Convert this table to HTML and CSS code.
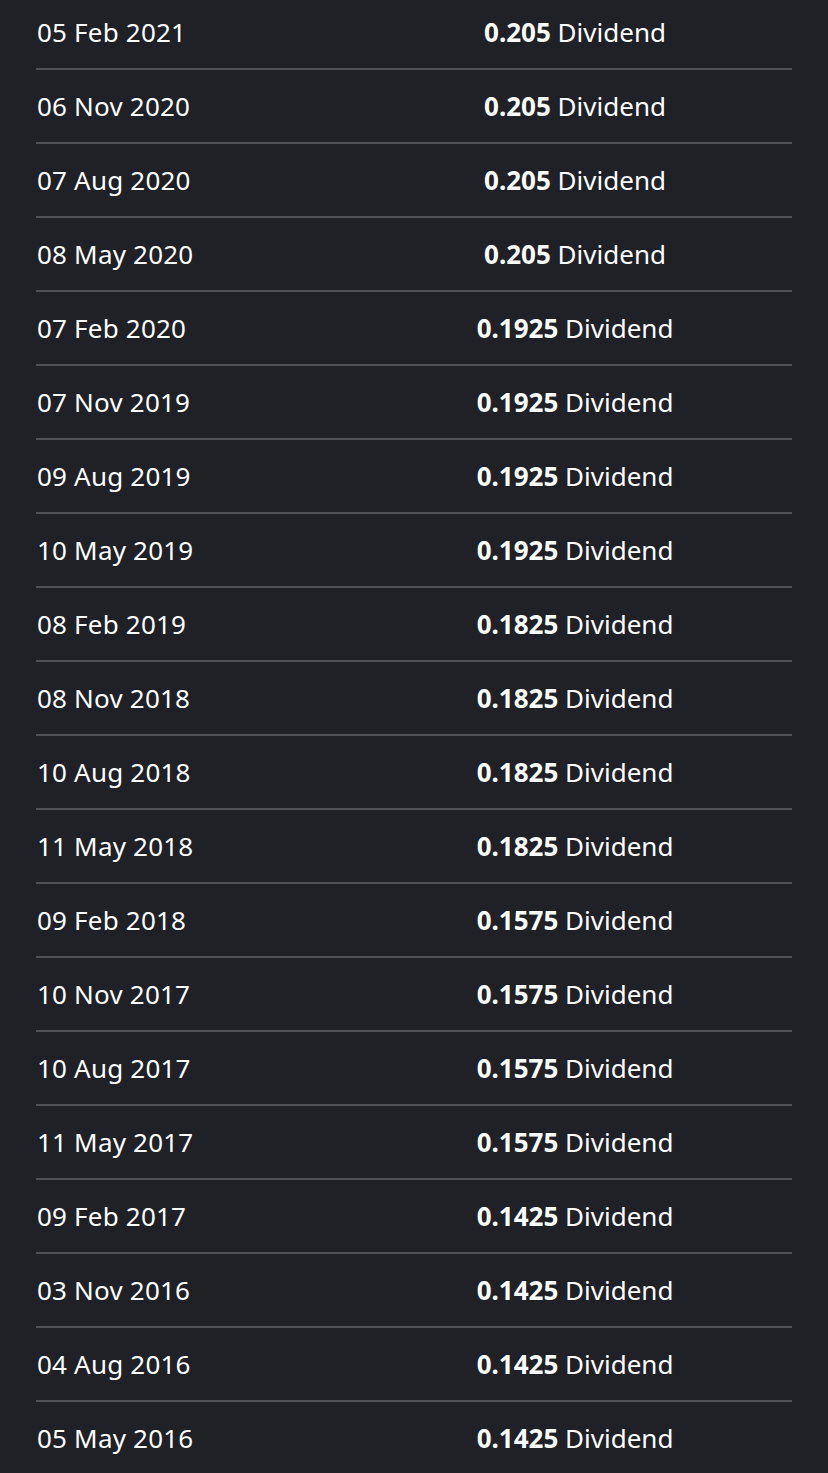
FILE: index.html
```html
<!DOCTYPE html>
<html lang="en">
  <head>
    <meta charset="UTF-8" />
    <meta name="viewport" content="width=device-width, initial-scale=1.0" />
    <title>Dividends</title>
    <link rel="stylesheet" href="styles.css">
  </head>
  <body>
    <div class="list">
      <div class="row"><span class="date">05 Feb 2021</span><span class="amount"><b>0.205</b> Dividend</span></div>
      <div class="row"><span class="date">06 Nov 2020</span><span class="amount"><b>0.205</b> Dividend</span></div>
      <div class="row"><span class="date">07 Aug 2020</span><span class="amount"><b>0.205</b> Dividend</span></div>
      <div class="row"><span class="date">08 May 2020</span><span class="amount"><b>0.205</b> Dividend</span></div>
      <div class="row"><span class="date">07 Feb 2020</span><span class="amount"><b>0.1925</b> Dividend</span></div>
      <div class="row"><span class="date">07 Nov 2019</span><span class="amount"><b>0.1925</b> Dividend</span></div>
      <div class="row"><span class="date">09 Aug 2019</span><span class="amount"><b>0.1925</b> Dividend</span></div>
      <div class="row"><span class="date">10 May 2019</span><span class="amount"><b>0.1925</b> Dividend</span></div>
      <div class="row"><span class="date">08 Feb 2019</span><span class="amount"><b>0.1825</b> Dividend</span></div>
      <div class="row"><span class="date">08 Nov 2018</span><span class="amount"><b>0.1825</b> Dividend</span></div>
      <div class="row"><span class="date">10 Aug 2018</span><span class="amount"><b>0.1825</b> Dividend</span></div>
      <div class="row"><span class="date">11 May 2018</span><span class="amount"><b>0.1825</b> Dividend</span></div>
      <div class="row"><span class="date">09 Feb 2018</span><span class="amount"><b>0.1575</b> Dividend</span></div>
      <div class="row"><span class="date">10 Nov 2017</span><span class="amount"><b>0.1575</b> Dividend</span></div>
      <div class="row"><span class="date">10 Aug 2017</span><span class="amount"><b>0.1575</b> Dividend</span></div>
      <div class="row"><span class="date">11 May 2017</span><span class="amount"><b>0.1575</b> Dividend</span></div>
      <div class="row"><span class="date">09 Feb 2017</span><span class="amount"><b>0.1425</b> Dividend</span></div>
      <div class="row"><span class="date">03 Nov 2016</span><span class="amount"><b>0.1425</b> Dividend</span></div>
      <div class="row"><span class="date">04 Aug 2016</span><span class="amount"><b>0.1425</b> Dividend</span></div>
      <div class="row"><span class="date">05 May 2016</span><span class="amount"><b>0.1425</b> Dividend</span></div>
    </div>
  </body>
</html>
```

FILE: styles.css
```css
body {
  margin: 0;
  background-color: #1f2126;
  color: #fff;
  font-family: "Noto Sans", "Open Sans", sans-serif;
  font-size: 26px;
}
.list {
  padding: 0 36px;
}
.row {
  display: grid;
  grid-template-columns: 322px 1fr;
  align-items: center;
  height: 72px;
  border-bottom: 2px solid #505256;
}
.row:first-child {
  margin-top: -4px;
}
.date {
  padding-left: 1px;
  letter-spacing: 0.2px;
}
.amount {
  text-align: center;
}
.amount b {
  font-weight: 700;
}
```
